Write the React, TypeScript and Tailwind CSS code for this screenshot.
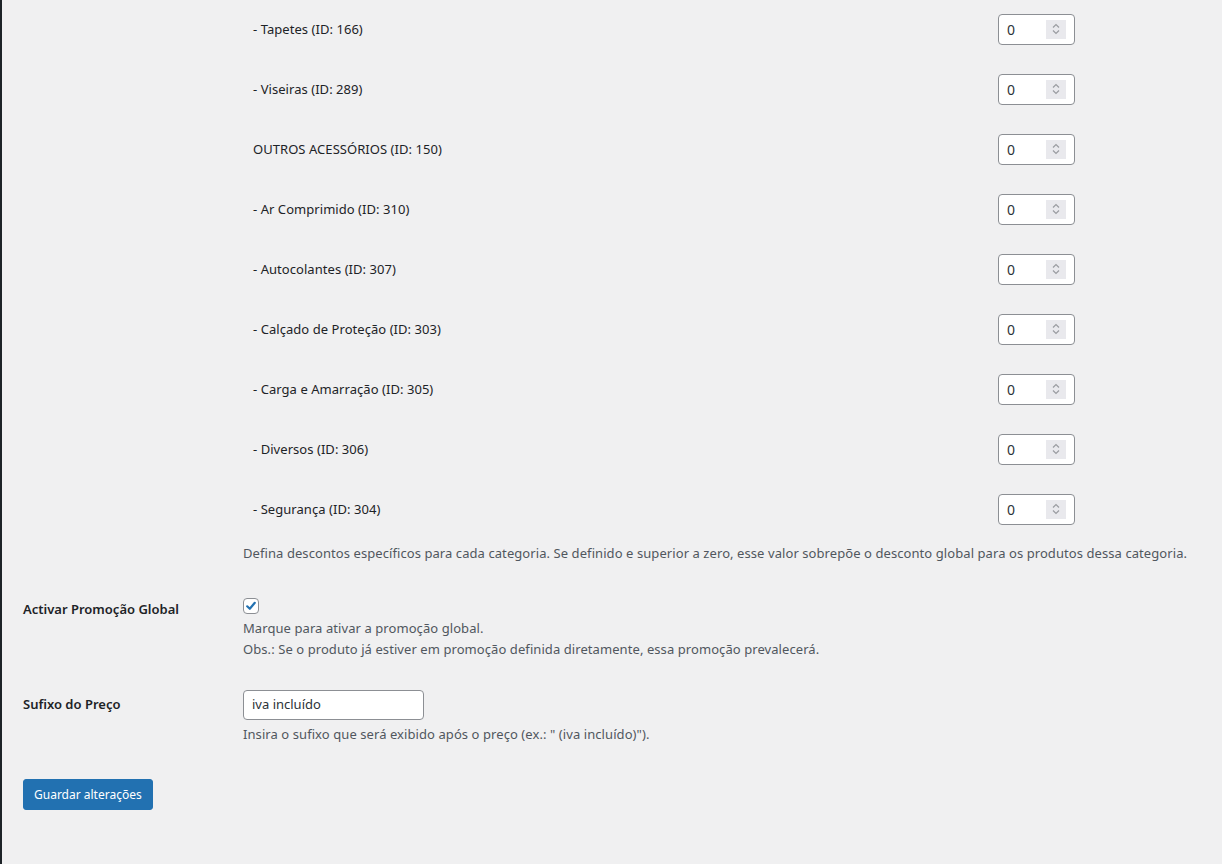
import React from "react";

const rows = [
  "- Tapetes (ID: 166)",
  "- Viseiras (ID: 289)",
  "OUTROS ACESSÓRIOS (ID: 150)",
  "- Ar Comprimido (ID: 310)",
  "- Autocolantes (ID: 307)",
  "- Calçado de Proteção (ID: 303)",
  "- Carga e Amarração (ID: 305)",
  "- Diversos (ID: 306)",
  "- Segurança (ID: 304)",
];

function NumberBox() {
  return (
    <div className="w-[77px] h-[31px] bg-white border border-[#8c8f94] rounded-[4px] flex items-center pl-[8px] pr-[8px] justify-between">
      <span className="text-[14px] text-[#2c3338]">0</span>
      <div className="w-[20px] h-[19px] bg-[#e9e9ed] flex items-center justify-center">
        <svg width="10" height="14" viewBox="0 0 10 14" fill="none" stroke="#9a9ca1" strokeWidth="1.2">
          <path d="M2 5.5 L5 2.5 L8 5.5" />
          <path d="M2 8.5 L5 11.5 L8 8.5" />
        </svg>
      </div>
    </div>
  );
}

export default function App() {
  return (
    <div
      className="min-h-[864px] bg-[#f0f0f1] border-l-2 border-[#1d2327] text-[#1d2327] overflow-hidden"
      style={{ fontFamily: '"Noto Sans", "Open Sans", sans-serif' }}
    >
      <div className="pl-[21px]">
        {/* Categories row */}
        <div className="flex">
          <div className="w-[220px] shrink-0" />
          <div className="flex-1 mt-[-1px]">
            {rows.map((r) => (
              <div key={r} className="h-[60px] flex items-center">
                <div className="w-[755px] pl-[10px] pt-[2px] text-[13px] tracking-[0.05px] text-[#1d2327]">{r}</div>
                <NumberBox />
              </div>
            ))}
            <p className="text-[13px] tracking-[0.075px] text-[#50575e] mt-[5px] whitespace-nowrap">
              Defina descontos específicos para cada categoria. Se definido e superior a zero, esse valor sobrepõe o desconto global para os produtos dessa categoria.
            </p>
          </div>
        </div>

        {/* Activar Promoção Global */}
        <div className="flex mt-[35px]">
          <div className="w-[220px] shrink-0 text-[13px] font-semibold pt-[1px]">Activar Promoção Global</div>
          <div className="flex-1">
            <div className="w-[16px] h-[16px] mt-[-1px] bg-white border border-[#8c8f94] rounded-[4px] flex items-center justify-center">
              <svg width="12" height="12" viewBox="0 0 12 12" fill="none" stroke="#2271b1" strokeWidth="2.2" strokeLinecap="round" strokeLinejoin="round">
                <path d="M2.2 6.3 L4.8 8.8 L9.8 2.8" />
              </svg>
            </div>
            <p className="text-[13px] tracking-[0.075px] text-[#50575e] mt-[4px] leading-[21px]">Marque para ativar a promoção global.</p>
            <p className="text-[13px] tracking-[0.075px] text-[#50575e] leading-[21px]">
              Obs.: Se o produto já estiver em promoção definida diretamente, essa promoção prevalecerá.
            </p>
          </div>
        </div>

        {/* Sufixo do Preço */}
        <div className="flex mt-[30px]">
          <div className="w-[220px] shrink-0 text-[13px] font-semibold pt-[5px]">Sufixo do Preço</div>
          <div className="flex-1">
            <div className="w-[181px] h-[30px] bg-white border border-[#8c8f94] rounded-[4px] flex items-center px-[8px] text-[13px] text-[#2c3338]">
              iva incluído
            </div>
            <p className="text-[13px] tracking-[0.075px] text-[#50575e] mt-[5px]">
              Insira o sufixo que será exibido após o preço (ex.: " (iva incluído)").
            </p>
          </div>
        </div>

        <button className="mt-[35px] h-[31px] px-[10px] bg-[#2271b1] text-white text-[12px] rounded-[3px] border border-[#2271b1]">
          Guardar alterações
        </button>
      </div>
    </div>
  );
}
